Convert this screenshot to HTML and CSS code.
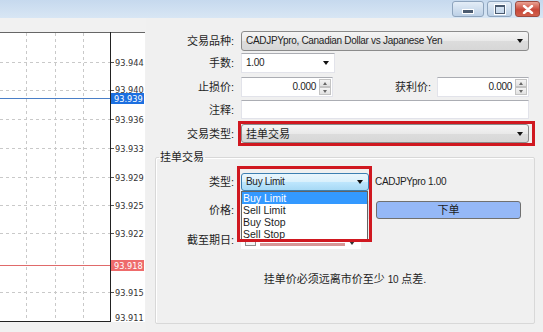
FILE: index.html
```html
<!DOCTYPE html>
<html lang="zh-CN">
<head>
<meta charset="utf-8">
<title>下单</title>
<link rel="stylesheet" href="styles.css">
</head>
<body>
<div class="window">
  <div class="titlebar">
    <div class="tb-btn tb-min"><span class="min-glyph"></span></div>
    <div class="tb-btn tb-max"><span class="max-glyph"></span></div>
    <div class="tb-btn tb-close">
      <svg width="12" height="9" viewBox="0 0 12 9"><path d="M2 1 L10 8 M10 1 L2 8" stroke="#fff" stroke-width="2.4" stroke-linecap="round"/></svg>
    </div>
  </div>
  <div class="main">
    <div class="chart">
      <svg width="146" height="314" viewBox="0 18 146 314">
        <rect x="0" y="18" width="146" height="314" fill="#f1f1f1"/>
        <rect x="0" y="32" width="145" height="290" fill="#ffffff"/>
        <g stroke="#c9c9c9" stroke-width="1" stroke-dasharray="3,3">
          <line x1="26.5" y1="33" x2="26.5" y2="321"/>
          <line x1="55.5" y1="33" x2="55.5" y2="321"/>
          <line x1="83.5" y1="33" x2="83.5" y2="321"/>
          <line x1="0" y1="62.5" x2="110" y2="62.5"/>
          <line x1="0" y1="90.5" x2="110" y2="90.5"/>
          <line x1="0" y1="119.5" x2="110" y2="119.5"/>
          <line x1="0" y1="148.5" x2="110" y2="148.5"/>
          <line x1="0" y1="177.5" x2="110" y2="177.5"/>
          <line x1="0" y1="205.5" x2="110" y2="205.5"/>
          <line x1="0" y1="233.5" x2="110" y2="233.5"/>
          <line x1="0" y1="292.5" x2="110" y2="292.5"/>
        </g>
        <g stroke="#555" stroke-width="1">
          <line x1="111" y1="62.5" x2="114" y2="62.5"/>
          <line x1="111" y1="90.5" x2="114" y2="90.5"/>
          <line x1="111" y1="119.5" x2="114" y2="119.5"/>
          <line x1="111" y1="148.5" x2="114" y2="148.5"/>
          <line x1="111" y1="177.5" x2="114" y2="177.5"/>
          <line x1="111" y1="205.5" x2="114" y2="205.5"/>
          <line x1="111" y1="233.5" x2="114" y2="233.5"/>
          <line x1="111" y1="292.5" x2="114" y2="292.5"/>
        </g>
        <line x1="0" y1="98.5" x2="111" y2="98.5" stroke="#4a7fc8" stroke-width="1"/>
        <line x1="0" y1="265.5" x2="111" y2="265.5" stroke="#e06a6a" stroke-width="1"/>
        <line x1="0" y1="32.5" x2="145" y2="32.5" stroke="#666" stroke-width="1"/>
        <line x1="110.5" y1="32" x2="110.5" y2="322" stroke="#222" stroke-width="1"/>
        <line x1="0" y1="321.5" x2="111" y2="321.5" stroke="#222" stroke-width="1"/>
        <g class="axis-text">
          <text x="115" y="65.5">93.944</text>
          <text x="115" y="93">93.940</text>
          <text x="115" y="122.5">93.936</text>
          <text x="115" y="151.5">93.933</text>
          <text x="115" y="180.5">93.929</text>
          <text x="115" y="208.5">93.925</text>
          <text x="115" y="237">93.922</text>
          <text x="115" y="295.5">93.915</text>
          <text x="115" y="320.5">93.911</text>
        </g>
        <rect x="111" y="93" width="33" height="11" fill="#1c6fe0"/>
        <text class="axis-text tag" x="114" y="102">93.939</text>
        <rect x="111" y="260" width="33" height="11" fill="#ee6b6b"/>
        <text class="axis-text tag" x="114" y="269">93.918</text>
      </svg>
    </div>
    <div class="dialog">
      <div class="row r1">
        <span class="label">交易品种:</span>
        <div class="select wide"><span class="sel-text lt">CADJPYpro, Canadian Dollar vs Japanese Yen</span><span class="arrow"></span></div>
      </div>
      <div class="row r2">
        <span class="label">手数:</span>
        <div class="combo"><span class="sel-text lt">1.00</span><span class="arrow"></span></div>
      </div>
      <div class="row r3">
        <span class="label">止损价:</span>
        <div class="spin"><span class="num lt">0.000</span><span class="spin-btns"><span class="sb up"></span><span class="sb down"></span></span></div>
        <span class="label label-tp">获利价:</span>
        <div class="spin"><span class="num lt">0.000</span><span class="spin-btns"><span class="sb up"></span><span class="sb down"></span></span></div>
      </div>
      <div class="row r4">
        <span class="label">注释:</span>
        <div class="textbox"></div>
      </div>
      <div class="row r5">
        <span class="label">交易类型:</span>
        <div class="mark-wrap">
          <div class="select wide"><span class="sel-text">挂单交易</span><span class="arrow"></span></div>
          <span class="red-box red-box-1"></span>
        </div>
      </div>
      <fieldset class="group">
        <legend>挂单交易</legend>
        <div class="grow g1">
          <span class="glabel">类型:</span>
          <div class="mark-wrap">
            <div class="select focus"><span class="sel-text lt">Buy Limit</span><span class="arrow"></span></div>
            <ul class="dropdown lt">
              <li class="active">Buy Limit</li>
              <li>Sell Limit</li>
              <li>Buy Stop</li>
              <li>Sell Stop</li>
            </ul>
            <span class="red-box red-box-2"></span>
          </div>
          <span class="symbol lt">CADJPYpro 1.00</span>
        </div>
        <div class="grow g2">
          <span class="glabel">价格:</span>
          <div class="price-box"></div>
          <button class="order-btn" type="button">下单</button>
        </div>
        <div class="grow g3">
          <span class="glabel">截至期日:</span>
          <div class="date-box"><span class="check"></span><span class="date-smudge"></span><span class="date-arrow"></span></div>
        </div>
        <p class="note">挂单价必须远离市价至少 <span class="lt">10</span> 点差.</p>
      </fieldset>
    </div>
  </div>
</div>
</body>
</html>
```
FILE: styles.css
```css
html, body {
  margin: 0;
  padding: 0;
}
body {
  width: 543px;
  height: 332px;
  overflow: hidden;
  background: #f0f0f0;
  font-family: "Liberation Sans", "Noto Sans CJK SC", sans-serif;
  font-size: 11px;
  color: #1e1e1e;
}
.lt {
  font-size: 10px;
  letter-spacing: -0.3px;
}
.window {
  width: 543px;
  height: 332px;
  display: flex;
  flex-direction: column;
}
.titlebar {
  height: 18px;
  flex: none;
  background: linear-gradient(#c6d9ee, #d8e6f4);
  display: flex;
  justify-content: flex-end;
  align-items: flex-start;
  padding: 1px 3px 0 0;
  box-sizing: border-box;
  gap: 3px;
}
.tb-btn {
  height: 16px;
  box-sizing: border-box;
  border: 1px solid #8ea4bd;
  border-radius: 3px;
  display: flex;
  align-items: center;
  justify-content: center;
}
.tb-min {
  width: 32px;
  background: linear-gradient(#e4edf7, #bcd0e6);
}
.tb-max {
  width: 25px;
  background: linear-gradient(#e4edf7, #bcd0e6);
}
.tb-close {
  width: 25px;
  border-color: #9c4a40;
  background: linear-gradient(#eaa293, #c9483a 55%, #d0604c);
}
.min-glyph {
  width: 10px;
  height: 3px;
  background: #4b5b70;
  border: 1px solid #fff;
  margin-top: 5px;
}
.max-glyph {
  width: 8px;
  height: 6px;
  border: 1px solid #4b5b70;
  border-top-width: 2px;
  box-shadow: 0 0 0 1px #fff;
}
.main {
  flex: 1;
  display: flex;
}
.chart {
  width: 146px;
  flex: none;
}
.chart svg {
  display: block;
}
.axis-text text, text.axis-text {
  font-family: "DejaVu Sans", sans-serif;
  font-size: 8.2px;
  fill: #333;
}
text.tag {
  fill: #fff;
}
.dialog {
  flex: 1;
  display: flex;
  flex-direction: column;
  padding-top: 13px;
}
.row {
  display: flex;
  align-items: center;
  height: 20px;
}
.r2 { margin-top: 2px; }
.r3 { margin-top: 4px; }
.r4 { margin-top: 3px; height: 19px; }
.r5 { margin-top: 5px; height: 19px; }
.label {
  width: 88px;
  text-align: right;
  margin-right: 7px;
  line-height: 14px;
  white-space: nowrap;
}
.label-tp {
  width: 98px;
  margin-right: 6px;
}
.select, .combo {
  box-sizing: border-box;
  height: 20px;
  display: flex;
  align-items: center;
  justify-content: space-between;
  padding: 0 5px 0 4px;
  white-space: nowrap;
}
.select {
  border: 1px solid #8b8b8b;
  border-radius: 3px;
  background: linear-gradient(#f5f5f5, #e9e9e9 50%, #dcdcdc 51%, #d7d7d7);
}
.wide {
  width: 288px;
}
.r5 .select { height: 19px; }
.sel-text {
  line-height: 14px;
}
.arrow {
  width: 0;
  height: 0;
  border-left: 3.5px solid transparent;
  border-right: 3.5px solid transparent;
  border-top: 4px solid #111;
}
.combo {
  width: 94px;
  background: #fff;
  border: 1px solid #e2e3ea;
  border-top-color: #abadb3;
}
.spin {
  box-sizing: border-box;
  width: 92px;
  height: 20px;
  display: flex;
  align-items: center;
  background: #fff;
  border: 1px solid #e2e3ea;
  border-top-color: #abadb3;
}
.num {
  flex: 1;
  text-align: right;
  padding-right: 3px;
  line-height: 14px;
}
.spin-btns {
  width: 12px;
  height: 16px;
  display: flex;
  flex-direction: column;
  margin-right: 1px;
}
.sb {
  flex: 1;
  box-sizing: border-box;
  border: 1px solid #c3c3c3;
  background: linear-gradient(#f4f4f4, #e1e1e1);
  position: relative;
}
.sb::after {
  content: "";
  position: absolute;
  left: 2.5px;
  top: 2px;
  border-left: 2.5px solid transparent;
  border-right: 2.5px solid transparent;
}
.up::after { border-bottom: 3px solid #666; }
.down::after { border-top: 3px solid #666; }
.textbox {
  box-sizing: border-box;
  width: 288px;
  height: 19px;
  background: #fff;
  border: 1px solid #e2e3ea;
  border-top-color: #abadb3;
}
.mark-wrap {
  position: relative;
  display: flex;
}
.red-box {
  position: absolute;
  border: 3px solid #d01820;
  pointer-events: none;
}
.red-box-1 {
  left: -3px;
  top: -3px;
  right: -6px;
  bottom: -3px;
}
.group {
  margin: 7px 8px 0 9px;
  padding: 0;
  height: 174px;
  box-sizing: border-box;
  border: 1px solid #d8d8d8;
  border-radius: 2px;
  box-shadow: inset 1px 1px 0 #fff;
  display: flex;
  flex-direction: column;
}
.group legend {
  padding: 0 1px;
  margin-left: 3px;
  line-height: 14px;
}
.grow {
  display: flex;
  align-items: center;
  height: 18px;
}
.g1 { margin-top: 9px; }
.g2 { margin-top: 10px; }
.g3 { margin-top: 12px; }
.glabel {
  width: 78px;
  text-align: right;
  margin-right: 7px;
  line-height: 14px;
  white-space: nowrap;
}
.select.focus {
  width: 128px;
  height: 18px;
  border-color: #3c7fb1;
  background: linear-gradient(#eaf6fd, #d9f0fc 50%, #bee6fd 51%, #a7d9f5);
}
.dropdown {
  position: absolute;
  left: 0;
  top: 18px;
  width: 127px;
  margin: 0;
  padding: 0;
  list-style: none;
  background: #fff;
  border: 1px solid #646464;
  box-sizing: border-box;
  z-index: 2;
  font-size: 10.5px;
  letter-spacing: 0;
}
.dropdown li {
  height: 12px;
  line-height: 12px;
  padding-left: 1px;
  white-space: nowrap;
}
.dropdown li.active {
  background: #3399ff;
  color: #fff;
}
.red-box-2 {
  left: -4px;
  top: -7px;
  width: 129px;
  height: 70px;
  z-index: 3;
}
.symbol {
  margin-left: 6px;
  white-space: nowrap;
  line-height: 14px;
}
.price-box {
  box-sizing: border-box;
  width: 128px;
  height: 18px;
  background: #fff;
  border: 1px solid #e2e3ea;
}
.order-btn {
  box-sizing: border-box;
  width: 145px;
  height: 18px;
  margin: 0 0 0 7px;
  padding: 0;
  border: 1px solid #707070;
  border-radius: 3px;
  background: #95b8f7;
  font-family: "Liberation Sans", "Noto Sans CJK SC", sans-serif;
  font-size: 11px;
  line-height: 14px;
  color: #1e1e1e;
}
.date-box {
  box-sizing: border-box;
  width: 120px;
  height: 18px;
  background: #fff;
  display: flex;
  align-items: center;
  padding: 0 6px 0 4px;
  gap: 4px;
}
.check {
  width: 11px;
  height: 11px;
  box-sizing: border-box;
  border: 1px solid #8f8f8f;
  background: #f4f4f4;
  flex: none;
}
.date-smudge {
  flex: 1;
  height: 3px;
  margin-top: 8px;
  background: #c76a6a;
  opacity: 0.7;
}
.date-arrow {
  width: 0;
  height: 0;
  margin-top: 6px;
  border-left: 3.5px solid transparent;
  border-right: 3.5px solid transparent;
  border-top: 4px solid #333;
}
.note {
  margin: 23px 0 0 0;
  text-align: center;
  line-height: 14px;
}
```
